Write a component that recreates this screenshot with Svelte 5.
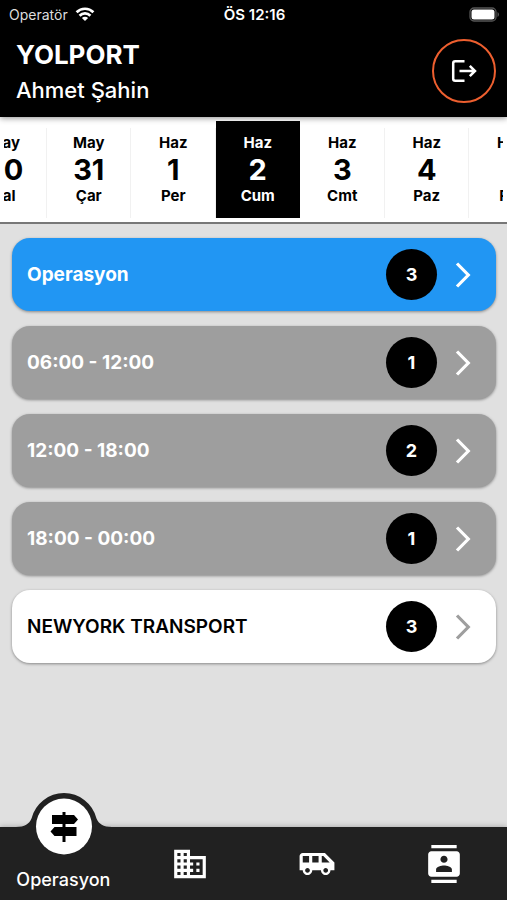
<script>
  const days = [
    { month: 'May', day: 30, name: 'Sal' },
    { month: 'May', day: 31, name: 'Çar' },
    { month: 'Haz', day: 1, name: 'Per' },
    { month: 'Haz', day: 2, name: 'Cum' },
    { month: 'Haz', day: 3, name: 'Cmt' },
    { month: 'Haz', day: 4, name: 'Paz' },
    { month: 'Haz', day: 5, name: 'Pzt' }
  ];
  let selected = $state(2);

  const groups = [
    { label: 'Operasyon', count: 3, tone: 'blue' },
    { label: '06:00 - 12:00', count: 1, tone: 'grey' },
    { label: '12:00 - 18:00', count: 2, tone: 'grey' },
    { label: '18:00 - 00:00', count: 1, tone: 'grey' },
    { label: 'NEWYORK TRANSPORT', count: 3, tone: 'white' }
  ];

  const tabs = [
    {
      label: 'Firmalar',
      path: 'M12 7V3H2v18h20V7H12zM6 19H4v-2h2v2zm0-4H4v-2h2v2zm0-4H4V9h2v2zm0-4H4V5h2v2zm4 12H8v-2h2v2zm0-4H8v-2h2v2zm0-4H8V9h2v2zm0-4H8V5h2v2zm10 12h-8v-2h2v-2h-2v-2h2v-2h-2V9h8v10zm-2-8h-2v2h2v-2zm0 4h-2v2h2v-2z'
    },
    {
      label: 'Araçlar',
      path: 'M17 5H3c-1.1 0-2 .89-2 2v9h2c0 1.65 1.34 3 3 3s3-1.35 3-3h5.5c0 1.65 1.34 3 3 3s3-1.35 3-3H23v-5l-6-6zM3 11V7h4v4H3zm3 6.5c-.83 0-1.5-.67-1.5-1.5s.67-1.5 1.5-1.5 1.5.67 1.5 1.5-.67 1.5-1.5 1.5zm7-6.5H9V7h4v4zm4.5 6.5c-.83 0-1.5-.67-1.5-1.5s.67-1.5 1.5-1.5 1.5.67 1.5 1.5-.67 1.5-1.5 1.5zM15 11V7h1l4 4h-5z'
    },
    {
      label: 'Kişiler',
      path: 'M20 0H4v2h16V0zM4 24h16v-2H4v2zM20 4H4c-1.1 0-2 .9-2 2v12c0 1.1.9 2 2 2h16c1.1 0 2-.9 2-2V6c0-1.1-.9-2-2-2zm-8 2.75c1.24 0 2.25 1.01 2.25 2.25s-1.01 2.25-2.25 2.25S9.75 10.24 9.75 9 10.76 6.75 12 6.75zM17 17H7v-1.5c0-1.67 3.33-2.5 5-2.5s5 .83 5 2.5V17z'
    }
  ];
</script>

<div class="app">
  <header>
    <div class="status">
      <span class="carrier">
        Operatör
        <svg width="20" height="14" viewBox="0 0 20 14" fill="none" stroke="#fff" stroke-width="2.7" aria-hidden="true">
          <path d="M1.600 5.200a12 12 0 0 1 16.800 0" />
          <path d="M4.600 8.700a7.600 7.600 0 0 1 10.800 0" />
          <path d="M10 14 6.900 11a4.300 4.300 0 0 1 6.200 0z" fill="#fff" stroke="none" />
        </svg>
      </span>
      <span class="time">ÖS 12:16</span>
      <svg class="battery" width="31" height="15" viewBox="0 0 31 15" aria-hidden="true">
        <rect x="1" y="1" width="26" height="13" rx="4" fill="none" stroke="#555" stroke-width="1.3" />
        <rect x="2.500" y="2.500" width="23" height="10" rx="2.500" fill="#fff" />
        <path d="M28.500 5v5a2.800 2.800 0 0 0 0-5z" fill="#555" />
      </svg>
    </div>
    <div class="title">
      <div>
        <h1>YOLPORT</h1>
        <p>Ahmet Şahin</p>
      </div>
      <button class="logout" aria-label="Çıkış">
        <svg width="28" height="28" viewBox="0 0 28 28" fill="none" stroke="#fff" stroke-width="2.500" aria-hidden="true">
          <path d="M14.500 4.200H5.200a2 2 0 0 0-2 2v15.600a2 2 0 0 0 2 2h9.300" />
          <path d="M9.500 14h15.500M19.800 8.800 25 14l-5.200 5.200" />
        </svg>
      </button>
    </div>
  </header>

  <div class="strip">
    <div class="days">
      {#each days as d}
        <button class="day" class:active={d.day === selected} onclick={() => (selected = d.day)}>
          <span>{d.month}</span>
          <strong>{d.day}</strong>
          <span>{d.name}</span>
        </button>
      {/each}
    </div>
  </div>

  <main>
    {#each groups as g}
      <button class="card {g.tone}">
        <span class="label">{g.label}</span>
        <span class="badge">{g.count}</span>
        <svg width="18" height="28" viewBox="0 0 18 28" fill="none" stroke="currentColor" stroke-width="3.200" aria-hidden="true">
          <path d="M3 2.500 14.300 14 3 25.500" />
        </svg>
      </button>
    {/each}
  </main>

  <nav>
    <a class="current" href="#operasyon">
      <svg class="bump" width="96" height="64" viewBox="0 0 96 64" aria-hidden="true">
        <path d="M0 34C9 34 13 31 15.500 25.500A33.500 33.500 0 0 1 80.500 25.500C83 31 87 34 96 34V64H0z" fill="#212121" />
        <circle cx="48" cy="33.500" r="28" fill="#fff" />
        <path d="M46.500 19h3v3h8.500l4 4.500-4 4.500h-8.500v3h11v9h-11v6h-3v-6h-8l-4-4.500 4-4.500h8v-3h-10.500v-9h10.500z" fill="#000" />
      </svg>
      <span>Operasyon</span>
    </a>
    {#each tabs as t}
      <a href="#{t.label}" aria-label={t.label}>
        <svg width="38" height="38" viewBox="0 0 24 24" fill="#fff" aria-hidden="true"><path d={t.path} /></svg>
      </a>
    {/each}
  </nav>
</div>

<style>
  :global(body) {
    margin: 0;
    background: #e0e0e0;
  }
  .app {
    min-height: 100vh;
    display: flex;
    flex-direction: column;
    background: #e0e0e0;
    font-family: Inter, 'Liberation Sans', sans-serif;
    color: #000;
  }
  button {
    font: inherit;
    color: inherit;
    border: 0;
    margin: 0;
    cursor: pointer;
  }
  svg {
    display: block;
    flex: none;
  }
  header {
    background: #000;
    color: #fff;
    position: relative;
    z-index: 1;
    box-shadow: 0 1px 6px rgba(0, 0, 0, 0.45);
  }
  .status {
    display: grid;
    grid-template-columns: 1fr auto 1fr;
    align-items: center;
    height: 28px;
    padding: 0 7px 0 9px;
    font-size: 14px;
  }
  .carrier {
    display: flex;
    align-items: center;
    gap: 7px;
    color: #ddd;
  }
  .time {
    font-size: 15px;
    font-weight: 600;
  }
  .battery {
    justify-self: end;
  }
  .title {
    display: flex;
    justify-content: space-between;
    align-items: center;
    padding: 8px 11px 7px 16px;
  }
  h1,
  p {
    margin: 0;
  }
  h1 {
    font-size: 26px;
    line-height: 38px;
    font-weight: 700;
  }
  p {
    font-size: 22px;
    line-height: 32px;
    font-weight: 500;
    margin-bottom: 4px;
  }
  .logout {
    width: 64px;
    height: 64px;
    margin-bottom: 4px;
    padding: 0;
    display: grid;
    place-items: center;
    border: 2px solid #ee5f2f;
    border-radius: 50%;
    background: transparent;
  }
  .strip {
    background: #fff;
    border-bottom: 2px solid #777;
    padding: 4px;
  }
  .days {
    display: flex;
    overflow: hidden;
  }
  .day {
    flex: none;
    box-sizing: border-box;
    width: calc(100vw / 6);
    padding: 12px 0;
    display: flex;
    flex-direction: column;
    align-items: center;
    background: linear-gradient(#f1f1f1, #f1f1f1) right bottom / 1px 90px no-repeat #fff;
    font-size: 15px;
    line-height: 20px;
    font-weight: 700;
  }
  .day:first-child {
    margin-left: -42px;
  }
  .day strong {
    font-size: 29px;
    line-height: 33px;
    font-weight: 700;
  }
  .day.active {
    background: #000;
    color: #fff;
  }
  main {
    flex: 1;
    display: flex;
    flex-direction: column;
    gap: 15px;
    padding: 14px 11px 50px 12px;
  }
  .card {
    display: flex;
    align-items: center;
    height: 73px;
    padding: 0 24px 0 15px;
    border-radius: 18px;
    box-shadow: 0 1px 3px rgba(0, 0, 0, 0.4);
    font-size: 19px;
    font-weight: 700;
    text-align: left;
  }
  .blue {
    background: #2196f3;
    color: #fff;
  }
  .grey {
    background: #9e9e9e;
    color: #fff;
  }
  .white {
    background: #fff;
    font-weight: 600;
  }
  .white svg {
    color: #9e9e9e;
  }
  .label {
    flex: 1;
  }
  .badge {
    width: 51px;
    height: 51px;
    margin-right: 17px;
    display: grid;
    place-items: center;
    border-radius: 50%;
    background: #000;
    color: #fff;
    font-size: 18px;
    font-weight: 700;
  }
  nav {
    display: grid;
    grid-template-columns: repeat(4, 1fr);
    height: 73px;
    background: #212121;
    box-shadow: 0 0 6px rgba(0, 0, 0, 0.3);
  }
  nav a {
    position: relative;
    display: grid;
    place-items: center;
    color: #fff;
    text-decoration: none;
    font-size: 18px;
    line-height: 24px;
    font-weight: 500;
  }
  nav .current {
    align-items: end;
    padding-bottom: 8px;
  }
  .bump {
    position: absolute;
    top: -34px;
    left: 50%;
    margin-left: -47px;
    overflow: visible;
  }
</style>
